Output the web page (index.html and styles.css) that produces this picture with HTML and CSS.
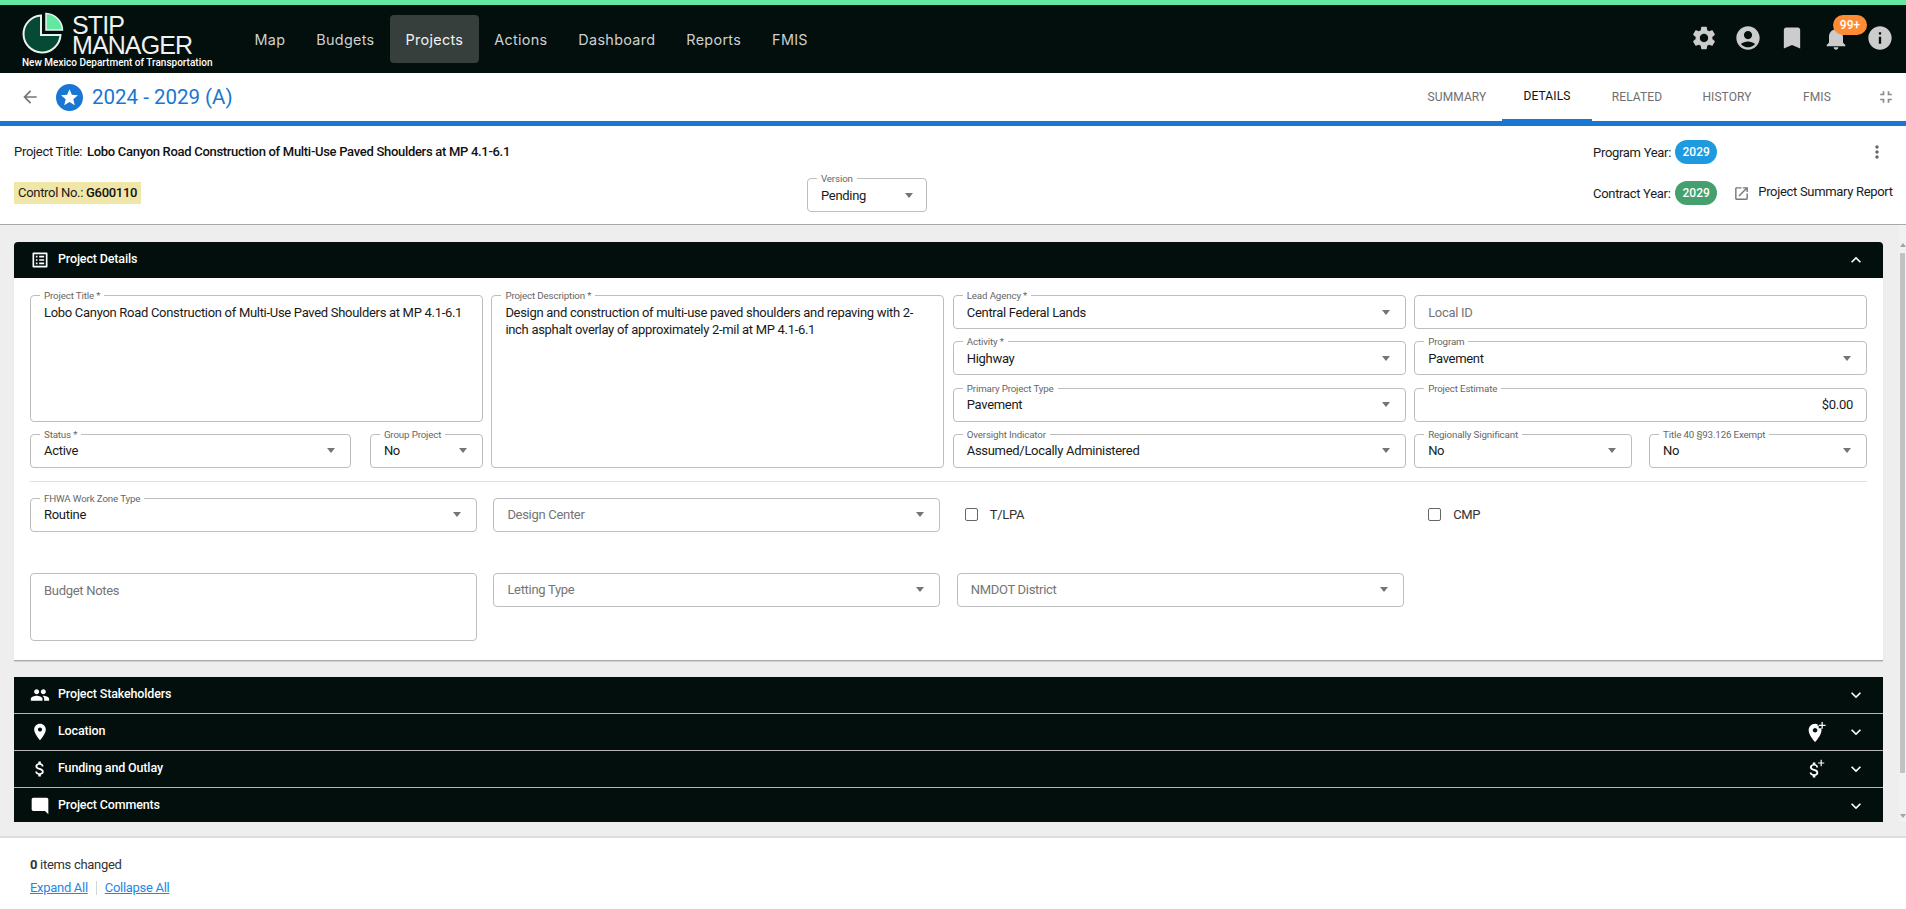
FILE: index.html
```html
<!DOCTYPE html>
<html lang="en">
<head>
<meta charset="utf-8">
<title>STIP Manager</title>
<link rel="stylesheet" href="styles.css">
</head>
<body>
<svg class="sprite" xmlns="http://www.w3.org/2000/svg">
  <symbol id="i-settings" viewBox="0 0 24 24"><path d="M19.14 12.94c.04-.3.06-.61.06-.94 0-.32-.02-.64-.07-.94l2.03-1.58c.18-.14.23-.41.12-.61l-1.92-3.32c-.12-.22-.37-.29-.59-.22l-2.39.96c-.5-.38-1.03-.7-1.62-.94l-.36-2.54c-.04-.24-.24-.41-.48-.41h-3.84c-.24 0-.43.17-.47.41l-.36 2.54c-.59.24-1.13.57-1.62.94l-2.39-.96c-.22-.08-.47 0-.59.22L2.74 8.87c-.12.21-.08.47.12.61l2.03 1.58c-.05.3-.09.63-.09.94s.02.64.07.94l-2.03 1.58c-.18.14-.23.41-.12.61l1.92 3.32c.12.22.37.29.59.22l2.39-.96c.5.38 1.03.7 1.62.94l.36 2.54c.05.24.24.41.48.41h3.84c.24 0 .44-.17.47-.41l.36-2.54c.59-.24 1.13-.56 1.62-.94l2.39.96c.22.08.47 0 .59-.22l1.92-3.32c.12-.22.07-.47-.12-.61l-2.01-1.58zM12 15.6c-1.98 0-3.6-1.62-3.6-3.6s1.62-3.6 3.6-3.6 3.6 1.62 3.6 3.6-1.62 3.6-3.6 3.6z"/></symbol>
  <symbol id="i-account" viewBox="0 0 24 24"><path d="M12 2C6.48 2 2 6.48 2 12s4.48 10 10 10 10-4.48 10-10S17.52 2 12 2zm0 4c1.93 0 3.5 1.57 3.5 3.5S13.93 13 12 13s-3.5-1.57-3.5-3.5S10.07 6 12 6zm0 14c-2.03 0-4.43-.82-6.14-2.88C7.55 15.8 9.68 15 12 15s4.45.8 6.14 2.12C16.43 19.18 14.03 20 12 20z"/></symbol>
  <symbol id="i-bookmark" viewBox="0 0 24 24"><path d="M17 3H7c-1.1 0-1.99.9-1.99 2L5 21l7-3 7 3V5c0-1.1-.9-2-2-2z"/></symbol>
  <symbol id="i-bell" viewBox="0 0 24 24"><path d="M12 22c1.1 0 2-.9 2-2h-4c0 1.1.89 2 2 2zm6-6v-5c0-3.07-1.64-5.64-4.5-6.32V4c0-.83-.67-1.5-1.5-1.5s-1.5.67-1.5 1.5v.68C7.63 5.36 6 7.92 6 11v5l-2 2v1h16v-1l-2-2z"/></symbol>
  <symbol id="i-info" viewBox="0 0 24 24"><path d="M12 2C6.48 2 2 6.48 2 12s4.48 10 10 10 10-4.48 10-10S17.52 2 12 2zm1 15h-2v-6h2v6zm0-8h-2V7h2v2z"/></symbol>
  <symbol id="i-back" viewBox="0 0 24 24"><path d="M20 11H7.83l5.59-5.59L12 4l-8 8 8 8 1.41-1.41L7.83 13H20v-2z"/></symbol>
  <symbol id="i-star" viewBox="0 0 24 24"><path fill-rule="evenodd" d="M12 0a12 12 0 1 0 0 24a12 12 0 1 0 0-24zM12 4.6l2.1 5 5.4.4-4.1 3.5 1.3 5.3L12 15.9l-4.7 2.9 1.3-5.3L4.5 10l5.4-.4z"/></symbol>
  <symbol id="i-collapse" viewBox="0 0 24 24"><path d="M5 16h3v3h2v-5H5v2zm3-8H5v2h5V5H8v3zm6 11h2v-3h3v-2h-5v5zm2-11V5h-2v5h5V8h-3z"/></symbol>
  <symbol id="i-more" viewBox="0 0 24 24"><path d="M12 8c1.1 0 2-.9 2-2s-.9-2-2-2-2 .9-2 2 .9 2 2 2zm0 2c-1.1 0-2 .9-2 2s.9 2 2 2 2-.9 2-2-.9-2-2-2zm0 6c-1.1 0-2 .9-2 2s.9 2 2 2 2-.9 2-2-.9-2-2-2z"/></symbol>
  <symbol id="i-open" viewBox="0 0 24 24"><path d="M19 19H5V5h7V3H5c-1.11 0-2 .9-2 2v14c0 1.1.89 2 2 2h14c1.1 0 2-.9 2-2v-7h-2v7zM14 3v2h3.59l-9.83 9.83 1.41 1.41L19 6.41V10h2V3h-7z"/></symbol>
  <symbol id="i-list" viewBox="0 0 24 24"><path d="M19 5v14H5V5h14m1.1-2H3.9c-.5 0-.9.4-.9.9v16.2c0 .4.4.9.9.9h16.2c.4 0 .9-.5.9-.9V3.9c0-.5-.5-.9-.9-.9zM11 7h6v2h-6V7zm0 4h6v2h-6v-2zm0 4h6v2h-6zM7 7h2v2H7zm0 4h2v2H7zm0 4h2v2H7z"/></symbol>
  <symbol id="i-people" viewBox="0 0 24 24"><path d="M16 11c1.66 0 2.99-1.34 2.99-3S17.66 5 16 5c-1.66 0-3 1.34-3 3s1.34 3 3 3zm-8 0c1.66 0 2.99-1.34 2.99-3S9.66 5 8 5C6.34 5 5 6.34 5 8s1.34 3 3 3zm0 2c-2.33 0-7 1.17-7 3.5V19h14v-2.5c0-2.33-4.67-3.5-7-3.5zm8 0c-.29 0-.62.02-.97.05 1.16.84 1.97 1.97 1.97 3.45V19h6v-2.5c0-2.33-4.67-3.5-7-3.5z"/></symbol>
  <symbol id="i-place" viewBox="0 0 24 24"><path d="M12 2C8.13 2 5 5.13 5 9c0 5.25 7 13 7 13s7-7.75 7-13c0-3.87-3.13-7-7-7zm0 9.5c-1.38 0-2.5-1.12-2.5-2.5s1.12-2.5 2.5-2.5 2.5 1.12 2.5 2.5-1.12 2.5-2.5 2.5z"/></symbol>
  <symbol id="i-money" viewBox="0 0 24 24"><path d="M11.8 10.9c-2.27-.59-3-1.2-3-2.15 0-1.09 1.01-1.85 2.7-1.85 1.78 0 2.44.85 2.5 2.1h2.21c-.07-1.72-1.12-3.3-3.21-3.81V3h-3v2.16c-1.94.42-3.5 1.68-3.5 3.61 0 2.31 1.91 3.46 4.7 4.13 2.5.6 3 1.48 3 2.41 0 .69-.49 1.79-2.7 1.79-2.06 0-2.87-.92-2.98-2.1h-2.2c.12 2.19 1.76 3.42 3.68 3.83V21h3v-2.15c1.95-.37 3.5-1.5 3.5-3.55 0-2.84-2.43-3.81-4.7-4.4z"/></symbol>
  <symbol id="i-comment" viewBox="0 0 24 24"><path d="M4 2h16c1.1 0 2 .9 2 2v18l-4-4H4c-1.1 0-2-.9-2-2V4c0-1.1.9-2 2-2z"/></symbol>
  <symbol id="i-down" viewBox="0 0 24 24"><path d="M16.59 8.59L12 13.17 7.41 8.59 6 10l6 6 6-6z"/></symbol>
  <symbol id="i-up" viewBox="0 0 24 24"><path d="M12 8l-6 6 1.41 1.41L12 10.83l4.59 4.58L18 14z"/></symbol>
  <symbol id="i-addplace" viewBox="0 0 24 24"><path d="M11 3C7.13 3 4 6.13 4 10c0 5.25 7 13 7 13s7-7.75 7-13c0-.7-.1-1.4-.3-2H15V5.5h-1.2V3.6C13 3.2 12 3 11 3zm0 9.5c-1.38 0-2.5-1.12-2.5-2.5s1.12-2.5 2.5-2.5 2.5 1.12 2.5 2.5-1.12 2.5-2.5 2.5zM18 1h1.4v3H22.500v1.400H19.400V8.500H18V5.400H15V4h3z"/></symbol>
  <symbol id="i-addmoney" viewBox="0 0 24 24"><path d="M10.300 12c-2.100-.6-2.800-1.100-2.800-2 0-1 .9-1.700 2.500-1.700 1.700 0 2.300.8 2.300 2h2c-.1-1.600-1-3-3-3.500V4.800H8.500v2c-1.800.4-3.200 1.500-3.200 3.300 0 2.100 1.800 3.200 4.300 3.800 2.300.6 2.800 1.400 2.800 2.200 0 .6-.5 1.600-2.500 1.600-1.900 0-2.700-.8-2.800-1.900H5.100c.1 2 1.600 3.100 3.400 3.500v2h2.800v-2c1.800-.3 3.200-1.400 3.200-3.300 0-2.600-2.200-3.500-4.200-4zM17 2h1.300v2.800H21v1.300h-2.700v2.800H17V6.100h-2.700V4.800H17z"/></symbol>
</svg>

<header class="topbar">
  <div class="logo">
    <div class="logo-main">
      <svg class="logo-mark" viewBox="0 0 42 42" xmlns="http://www.w3.org/2000/svg">
        <path d="M19 3.500A18.500 18.500 0 1 0 38.500 23H19z" fill="#064a35" stroke="#e9f3ee" stroke-width="2"/>
        <path d="M24 1.500A17 17 0 0 1 40.500 18H24z" fill="#62e8a0" stroke="#e9f3ee" stroke-width="1.500"/>
      </svg>
      <div class="logo-name"><span>STIP</span><span>MANAGER</span></div>
    </div>
    <div class="logo-sub">New Mexico Department of Transportation</div>
  </div>
  <nav class="nav">
    <a class="nav-item">Map</a>
    <a class="nav-item">Budgets</a>
    <a class="nav-item active">Projects</a>
    <a class="nav-item">Actions</a>
    <a class="nav-item">Dashboard</a>
    <a class="nav-item">Reports</a>
    <a class="nav-item">FMIS</a>
  </nav>
  <div class="top-icons">
    <svg class="ti"><use href="#i-settings"/></svg>
    <svg class="ti"><use href="#i-account"/></svg>
    <svg class="ti"><use href="#i-bookmark"/></svg>
    <span class="bell"><svg class="ti"><use href="#i-bell"/></svg><span class="badge">99+</span></span>
    <svg class="ti"><use href="#i-info"/></svg>
  </div>
</header>

<div class="subbar">
  <svg class="back"><use href="#i-back"/></svg>
  <svg class="star"><use href="#i-star"/></svg>
  <h1 class="stip-title">2024 - 2029 (A)</h1>
  <div class="tabs">
    <a class="tab">Summary</a>
    <a class="tab current">Details</a>
    <a class="tab">Related</a>
    <a class="tab">History</a>
    <a class="tab">FMIS</a>
  </div>
  <svg class="collapse"><use href="#i-collapse"/></svg>
</div>

<section class="summary">
  <div class="sum-row sum-first">
    <div class="sum-main">Project Title: <b>Lobo Canyon Road Construction of Multi-Use Paved Shoulders at MP 4.1-6.1</b></div>
    <div class="sum-side">
      <span class="yr-label">Program Year:</span><span class="pill pill-blue">2029</span>
      <svg class="kebab"><use href="#i-more"/></svg>
    </div>
  </div>
  <div class="sum-row sum-second">
    <div class="sum-main">
      <span class="control">Control No.: <b>G600110</b></span>
      <div class="field version"><span class="flabel">Version</span><span class="val">Pending</span><i class="caret"></i></div>
    </div>
    <div class="sum-side">
      <span class="yr-label">Contract Year:</span><span class="pill pill-green">2029</span>
      <svg class="open"><use href="#i-open"/></svg>
      <span class="report">Project Summary Report</span>
    </div>
  </div>
</section>

<div class="workspace">
  <main class="content">
    <section class="panel">
      <div class="panel-head open-head">
        <svg class="ph-icon"><use href="#i-list"/></svg>
        <span class="ph-title">Project Details</span>
        <svg class="ph-chev"><use href="#i-up"/></svg>
      </div>
      <div class="panel-body">
        <div class="grid-main">
          <div class="field area span3"><span class="flabel">Project Title *</span><span class="val">Lobo Canyon Road Construction of Multi-Use Paved Shoulders at MP 4.1-6.1</span></div>
          <div class="field area span4"><span class="flabel">Project Description *</span><span class="val">Design and construction of multi-use paved shoulders and repaving with 2-inch asphalt overlay of approximately 2-mil at MP 4.1-6.1</span></div>
          <div class="field"><span class="flabel">Lead Agency *</span><span class="val">Central Federal Lands</span><i class="caret"></i></div>
          <div class="field"><span class="val ph">Local ID</span></div>
          <div class="field"><span class="flabel">Activity *</span><span class="val">Highway</span><i class="caret"></i></div>
          <div class="field"><span class="flabel">Program</span><span class="val">Pavement</span><i class="caret"></i></div>
          <div class="field"><span class="flabel">Primary Project Type</span><span class="val">Pavement</span><i class="caret"></i></div>
          <div class="field"><span class="flabel">Project Estimate</span><span class="val right">$0.00</span></div>
          <div class="pair pair-left">
            <div class="field"><span class="flabel">Status *</span><span class="val">Active</span><i class="caret"></i></div>
            <div class="field"><span class="flabel">Group Project</span><span class="val">No</span><i class="caret"></i></div>
          </div>
          <div class="field"><span class="flabel">Oversight Indicator</span><span class="val">Assumed/Locally Administered</span><i class="caret"></i></div>
          <div class="pair pair-right">
            <div class="field"><span class="flabel">Regionally Significant</span><span class="val">No</span><i class="caret"></i></div>
            <div class="field"><span class="flabel">Title 40 §93.126 Exempt</span><span class="val">No</span><i class="caret"></i></div>
          </div>
        </div>
        <hr class="rule">
        <div class="grid-more">
          <div class="field"><span class="flabel">FHWA Work Zone Type</span><span class="val">Routine</span><i class="caret"></i></div>
          <div class="field"><span class="val ph">Design Center</span><i class="caret"></i></div>
          <label class="check"><i class="box"></i>T/LPA</label>
          <label class="check"><i class="box"></i>CMP</label>
          <div class="field area notes"><span class="val ph">Budget Notes</span></div>
          <div class="field"><span class="val ph">Letting Type</span><i class="caret"></i></div>
          <div class="field"><span class="val ph">NMDOT District</span><i class="caret"></i></div>
        </div>
      </div>
    </section>

    <div class="stack">
      <div class="panel-head">
        <svg class="ph-icon"><use href="#i-people"/></svg>
        <span class="ph-title">Project Stakeholders</span>
        <svg class="ph-chev"><use href="#i-down"/></svg>
      </div>
      <div class="panel-head">
        <svg class="ph-icon"><use href="#i-place"/></svg>
        <span class="ph-title">Location</span>
        <svg class="ph-add"><use href="#i-addplace"/></svg>
        <svg class="ph-chev"><use href="#i-down"/></svg>
      </div>
      <div class="panel-head">
        <svg class="ph-icon"><use href="#i-money"/></svg>
        <span class="ph-title">Funding and Outlay</span>
        <svg class="ph-add"><use href="#i-addmoney"/></svg>
        <svg class="ph-chev"><use href="#i-down"/></svg>
      </div>
      <div class="panel-head">
        <svg class="ph-icon"><use href="#i-comment"/></svg>
        <span class="ph-title">Project Comments</span>
        <svg class="ph-chev"><use href="#i-down"/></svg>
      </div>
    </div>
  </main>
  <div class="scrollbar"><i class="sb-up"></i><i class="sb-thumb"></i><i class="sb-down"></i></div>
</div>

<footer class="footer">
  <div class="changed"><b>0</b> items changed</div>
  <div class="links"><a class="link">Expand All</a><span class="sep"></span><a class="link">Collapse All</a></div>
</footer>
</body>
</html>
```

FILE: styles.css
```css
* { box-sizing: border-box; }
html, body { margin: 0; height: 909px; overflow: hidden; }
body {
  display: flex;
  flex-direction: column;
  background: #eeeeee;
  color: #1c1c1c;
  font-family: Roboto, "Liberation Sans", sans-serif;
  font-size: 13px;
  letter-spacing: -.3px;
}
.sprite { display: none; }

/* top bar */
.topbar {
  height: 73px;
  flex: none;
  display: flex;
  align-items: flex-start;
  background: #020f0c;
  border-top: 5px solid #62e8a0;
}
.logo { width: 239px; flex: none; padding: 6px 0 0 22px; }
.logo-main { display: flex; align-items: flex-start; }
.logo-mark { width: 42px; height: 42px; margin: 1px 8px 0 0; flex: none; }
.logo-name { display: flex; flex-direction: column; color: #f0f0f0; font-family: "Liberation Sans", sans-serif; font-size: 25px; line-height: 20px; letter-spacing: -.9px; padding-top: 4px; }
.logo-sub { margin-top: 2px; color: #fff; font-size: 10px; line-height: 12px; font-weight: 500; letter-spacing: 0; white-space: nowrap; }
.nav { display: flex; margin-top: 10px; }
.nav-item { height: 48px; padding: 0 15.500px; display: flex; align-items: center; color: #cfcfcf; font-family: Inter, sans-serif; font-size: 14.400px; letter-spacing: .3px; border-radius: 4px; }
.nav-item.active { background: #373f3d; color: #f2f2f2; }
.top-icons { margin-left: auto; display: flex; gap: 16px; padding: 19px 12px 0 0; }
.ti { width: 28px; height: 28px; fill: #cccccc; display: block; }
.bell { position: relative; display: block; }
.badge { position: absolute; left: 11px; top: -9px; width: 34px; height: 20px; background: #ff8c34; color: #fff; border-radius: 10px; font-size: 12px; font-weight: 500; line-height: 20px; letter-spacing: 0; text-align: center; }

/* sub bar */
.subbar {
  height: 53px;
  flex: none;
  display: flex;
  align-items: flex-start;
  background: #fff;
  border-bottom: 5px solid #1976d2;
}
.back { width: 20px; height: 20px; margin: 14px 0 0 20px; fill: #757575; flex: none; }
.star { width: 27px; height: 27px; margin: 11px 0 0 16px; fill: #1976d2; flex: none; }
.stip-title { margin: 12px 0 0 9px; color: #1976d2; font-size: 20.500px; font-weight: 400; line-height: 24px; letter-spacing: 0; }
.tabs { margin-left: auto; display: flex; height: 48px; }
.tab { width: 90px; height: 48px; display: flex; align-items: center; justify-content: center; text-transform: uppercase; color: #6f6f6f; font-size: 12px; letter-spacing: .1px; }
.tab.current { color: #111; border-bottom: 2px solid #1976d2; }
.collapse { width: 20px; height: 20px; margin: 14px 10px 0 14px; fill: #8a8a8a; flex: none; }

/* summary */
.summary {
  height: 99px;
  flex: none;
  display: flex;
  flex-direction: column;
  gap: 15px;
  padding: 14px 0 0 14px;
  background: #fff;
  border-bottom: 1px solid #a9a9a9;
}
.sum-row { display: flex; align-items: center; }
.sum-first { height: 24px; }
.sum-second { height: 33px; align-items: flex-start; }
.sum-main { flex: 1; display: flex; align-items: flex-start; white-space: pre; line-height: 24px; }
.sum-main b, .control b { font-weight: 500; color: #111; }
.sum-first b { margin-left: 2px; }
.sum-side { width: 313px; flex: none; display: flex; align-items: center; }
.sum-second .sum-side { margin-top: 2px; }
.yr-label { width: 82px; flex: none; }
.pill { height: 24px; padding: 0 7.500px; border-radius: 12px; color: #fff; font-size: 12px; font-weight: 500; line-height: 24px; letter-spacing: 0; }
.pill-blue { background: #1e9be0; }
.pill-green { background: #45a06d; }
.kebab { width: 20px; height: 20px; margin-left: 150px; fill: #666; flex: none; }
.open { width: 17px; height: 17px; margin-left: 16px; fill: #777; flex: none; }
.report { margin: 0 0 3px 8px; white-space: nowrap; letter-spacing: -.32px; }
.control { width: 127px; height: 22px; margin-top: 3px; flex: none; background: #f0e6a8; padding: 0 4px; line-height: 22px; }
.version { width: 120px; margin: -1px 0 0 666px; }
.version .caret { margin-right: 0; }

/* fields */
.field {
  position: relative;
  height: 34px;
  min-width: 0;
  display: flex;
  align-items: center;
  padding: 0 13px;
  background: #fff;
  border: 1px solid #bdbdbd;
  border-radius: 4px;
}
.flabel { position: absolute; left: 9px; top: -6px; padding: 0 4px; background: #fff; color: #666; font-size: 9.750px; line-height: 11px; letter-spacing: -.15px; white-space: nowrap; }
.val { flex: 1; min-width: 0; color: #1a1a1a; line-height: 17px; white-space: nowrap; }
.val.ph { color: #757575; }
.val.right { text-align: right; }
.caret { flex: none; width: 0; height: 0; margin: 0 2px 0 8px; border-left: 4px solid transparent; border-right: 4px solid transparent; border-top: 5px solid #757575; }
.area { height: auto; align-items: flex-start; padding-top: 8px; }
.area .val { white-space: normal; }
.span3 { grid-column: 1; grid-row: 1 / span 3; }
.span4 { grid-column: 2; grid-row: 1 / span 4; }

/* panel */
.workspace { height: 597px; flex: none; display: flex; overflow: hidden; }
.content { flex: 1; min-width: 0; padding: 17px 16px 0 14px; display: flex; flex-direction: column; gap: 16px; }
.panel { flex: none; background: #fff; border-radius: 4px 4px 0 0; border-bottom: 1px solid #a9a9a9; box-shadow: 0 1px 1px rgba(0,0,0,.12); }
.panel-head { height: 36px; flex: none; display: flex; align-items: center; padding: 0 17px 0 16px; background: #020f0c; color: #fff; }
.open-head { border-radius: 4px 4px 0 0; }
.stack { flex: none; display: flex; flex-direction: column; gap: 1px; background: #b5b5b5; }
.ph-icon { width: 20px; height: 20px; margin-right: 8px; fill: #fff; flex: none; }
.ph-title { flex: 1; font-size: 12.500px; font-weight: 500; letter-spacing: -.15px; padding-bottom: 2.500px; }
.ph-add { width: 22px; height: 22px; margin-right: 19px; fill: #fff; flex: none; }
.ph-chev { width: 20px; height: 20px; fill: #fff; flex: none; }
.panel-body { padding: 17px 16px 19px; }
.grid-main { display: grid; grid-template-columns: repeat(4, 1fr); grid-auto-rows: 34px; column-gap: 8.500px; row-gap: 12.300px; }
.pair { display: flex; min-width: 0; }
.pair-left { gap: 19px; grid-column: 1; grid-row: 4; }
.pair-left .field:first-child { flex: 1; }
.pair-left .field:last-child { width: 113px; flex: none; }
.pair-right { gap: 17px; }
.pair-right .field { flex: 1; }
.rule { height: 1px; margin: 13px 0 16px; border: 0; background: #e0e0e0; }
.grid-more { display: grid; grid-template-columns: repeat(4, 1fr); align-items: start; column-gap: 16.500px; row-gap: 41px; }
.notes { height: 68px; padding-top: 8px; }
.check { display: flex; align-items: center; padding: 0 0 0 8px; gap: 12px; height: 34px; color: #333; }
.box { width: 13px; height: 13px; border: 1.500px solid #666; border-radius: 2px; flex: none; }

/* scrollbar */
.scrollbar { width: 7px; flex: none; display: flex; flex-direction: column; align-items: center; background: #f1f1f1; padding: 18px 0 0; }
.sb-up { width: 0; height: 0; flex: none; border-left: 3px solid transparent; border-right: 3px solid transparent; border-bottom: 4px solid #a3a3a3; }
.sb-thumb { width: 5px; height: 520px; flex: none; margin-top: 6px; background: #c1c1c1; border-radius: 1px; }
.sb-down { width: 0; height: 0; flex: none; margin-top: 41px; border-left: 3px solid transparent; border-right: 3px solid transparent; border-top: 4px solid #a3a3a3; }

/* footer */
.footer { flex: 1; margin-top: 14px; padding: 19px 30px 0; background: #fff; border-top: 2px solid #dedede; }
.changed { font-size: 13px; line-height: 16px; color: #333; }
.changed b { font-weight: 700; }
.links { display: flex; align-items: center; margin-top: 7px; }
.link { color: #1e88e5; text-decoration: underline; line-height: 16px; }
.sep { width: 1px; height: 14px; margin: 0 8px; background: #d5d5d5; }
```
